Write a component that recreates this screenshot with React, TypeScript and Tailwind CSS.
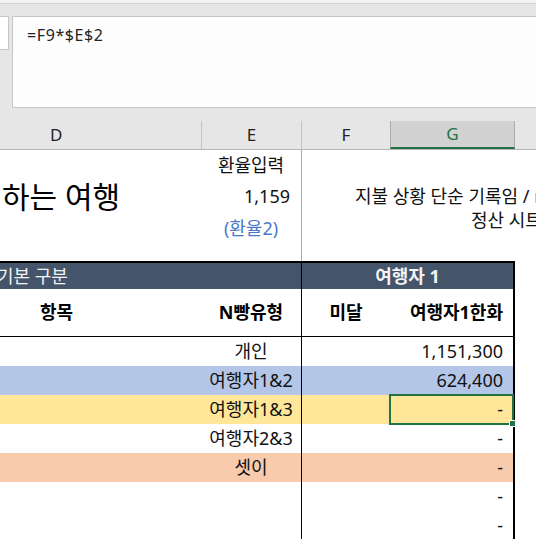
const font = "font-['Noto_Sans','Noto_Sans_CJK_KR',sans-serif]";

type DataRow = { type: string; amount: string; bg: string; selected?: boolean };

const rows: DataRow[] = [
  { type: "개인", amount: "1,151,300", bg: "bg-white" },
  { type: "여행자1&2", amount: "624,400", bg: "bg-[#b4c6e7]" },
  { type: "여행자1&3", amount: "-", bg: "bg-[#ffe699]", selected: true },
  { type: "여행자2&3", amount: "-", bg: "bg-white" },
  { type: "셋이", amount: "-", bg: "bg-[#f8cbad]" },
  { type: "", amount: "-", bg: "bg-white" },
  { type: "", amount: "-", bg: "bg-white" },
];

function FormulaBar() {
  return (
    <div className="bg-[#e6e6e6]">
      <div className="h-[3px] bg-[#f3f3f3]" />
      <div className="h-px bg-[#d5d5d5]" />
      <div className="flex items-start pt-[12px] pb-[12px]">
        <div className="w-[9px] h-[34px] bg-white border-y border-r border-[#c6c6c6]" />
        <div className="ml-[3px] flex-1 h-[92px] bg-[#fdfdfd] border-y border-l border-[#c6c6c6] pl-[14px] pt-[6px]">
          <span className="font-['Noto_Sans',sans-serif] text-[16px] leading-[24px] tracking-[0.6px] text-[#222]">
            =F9*$E$2
          </span>
        </div>
      </div>
    </div>
  );
}

function ColumnHeaders() {
  const label = "font-['Noto_Sans',sans-serif] text-[17px]";
  return (
    <div className="flex h-[30px] bg-[#e6e6e6] border-b border-[#b5b5b5]">
      <div className={`w-[202px] mt-px border-r border-[#c4c4c4] flex items-center pl-[50px] text-[#222] ${label}`}>
        D
      </div>
      <div className={`w-[100px] mt-px border-r border-[#c4c4c4] flex items-center justify-center text-[#222] ${label}`}>
        E
      </div>
      <div className={`w-[88px] flex items-center justify-center text-[#222] ${label}`}>F</div>
      <div
        className={`w-[125px] mt-px bg-[#d2d2d2] border-x border-[#ababab] border-b-2 border-b-[#217346] flex items-center justify-center text-[#217346] ${label}`}
      >
        G
      </div>
      <div className="flex-1" />
    </div>
  );
}

function TopCells() {
  return (
    <div className={`flex h-[111px] bg-white text-[18px] text-[#111] ${font}`}>
      <div className="w-[201px] flex flex-col">
        <div className="h-[30px]" />
        <div className="h-[33px] flex items-center pl-[2px] text-[30px] leading-[33px] whitespace-nowrap text-black">
          하는 여행
        </div>
      </div>
      <div className="w-[100px] flex flex-col">
        <div className="h-[30px] flex items-center justify-center">환율입력</div>
        <div className="h-[33px] flex items-center justify-end pr-[11px]">1,159</div>
        <div className="h-[30px] flex items-center justify-center text-[#4a78c8]">(환율2)</div>
      </div>
      <div className="flex-1 border-l border-[#ababab] overflow-hidden pt-[34px] leading-[24px] whitespace-nowrap">
        <div className="pl-[53px]">지불 상황 단순 기록임 / n빵 정산은</div>
        <div className="pl-[169px]">정산 시트 참고</div>
      </div>
    </div>
  );
}

function Table() {
  return (
    <div className={`flex text-[18px] text-[#111] ${font}`}>
      <div className="w-[515px] border-r-2 border-black">
        <div className="flex h-[28px] border-t-2 border-black bg-[#44546a] text-[#f2f2f2]">
          <div className="w-[301px] flex items-center overflow-hidden">
            <span className="-ml-[3px] whitespace-nowrap">기본 구분</span>
          </div>
          <div className="flex-1 border-l border-black flex items-center justify-center font-bold">
            여행자 1
          </div>
        </div>
        <div className="flex h-[48px] border-b border-black bg-white font-bold text-black">
          <div className="w-[201px] flex items-center pl-[40px]">항목</div>
          <div className="w-[100px] flex items-center justify-center">N빵유형</div>
          <div className="w-[89px] border-l border-black flex items-center justify-center">미달</div>
          <div className="flex-1 flex items-center justify-end pr-[10px]">여행자1한화</div>
        </div>
        {rows.map((r, i) => (
          <div key={i} className={`flex h-[29px] ${r.bg}`}>
            <div className="w-[201px]" />
            <div className="w-[100px] flex items-center justify-center whitespace-nowrap">{r.type}</div>
            <div className="w-[89px] border-l border-black" />
            <div className="relative flex-1 flex items-center justify-end pr-[10px]">
              {r.amount}
              {r.selected && (
                <div className="absolute -left-px -right-px -top-px -bottom-px border-2 border-[#217346] z-10">
                  <div className="absolute -right-[4px] -bottom-[4px] w-[7px] h-[7px] bg-[#217346] border border-white" />
                </div>
              )}
            </div>
          </div>
        ))}
      </div>
      <div className="flex-1 bg-white" />
    </div>
  );
}

export default function App() {
  return (
    <div className="w-[536px] h-[539px] overflow-hidden bg-white">
      <FormulaBar />
      <ColumnHeaders />
      <TopCells />
      <Table />
    </div>
  );
}
